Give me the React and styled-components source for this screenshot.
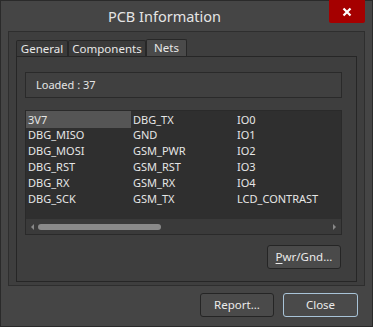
import React from 'react';
import styled, { createGlobalStyle } from 'styled-components';

const Global = createGlobalStyle`
  html, body { margin: 0; padding: 0; background: #454545; }
  body { font-family: 'Noto Sans', 'Open Sans', sans-serif; }
`;

const Window = styled.div`
  width: 373px;
  height: 327px;
  box-sizing: border-box;
  background: #454545;
  border: 1px solid #2a2a2a;
  display: flex;
  flex-direction: column;
  color: #e6e6e6;
`;

const TitleBar = styled.div`
  height: 30px;
  display: flex;
  align-items: flex-start;
  justify-content: center;
  position: relative;
`;

const Title = styled.div`
  font-size: 14.5px;
  margin-top: 5px;
  margin-right: 44px;
  color: #e4e4e4;
`;

const CloseX = styled.div`
  position: absolute;
  top: -1px;
  right: 7px;
  width: 36px;
  height: 23px;
  background: #a50000;
  display: flex;
  align-items: center;
  justify-content: center;
  border-radius: 0 0 2px 2px;
`;

const Panel = styled.div`
  margin: 0 7px;
  height: 255px;
  background: #3e3e3e;
  border: 1px solid #2e2e2e;
  padding: 7px 7px 6px 7px;
  box-sizing: border-box;
  display: flex;
  flex-direction: column;
`;

const Tabs = styled.div`
  display: flex;
  height: 17px;
  align-items: flex-end;
`;

const Tab = styled.div`
  width: ${p => p.$w}px;
  height: ${p => (p.$active ? 17 : 16)}px;
  box-sizing: border-box;
  text-align: center;
  font-size: 11.5px;
  line-height: ${p => (p.$active ? 16 : 15)}px;
  background: ${p => (p.$active ? '#4a4a4a' : '#3a3a3a')};
  border: 1px solid #272727;
  border-bottom: none;
  border-radius: 2px 2px 0 0;
  color: #e8e8e8;
  white-space: nowrap;
`;

const Page = styled.div`
  flex: 1;
  border: 1px solid #262626;
  background: #3e3e3e;
  padding: 15px 14px 12px 8px;
  display: flex;
  flex-direction: column;
`;

const LoadedBox = styled.div`
  height: 26px;
  box-sizing: border-box;
  border: 1px solid #2a2a2a;
  background: #404040;
  font-size: 11px;
  padding: 4px 0 0 10px;
  color: #e4e4e4;
`;

const List = styled.div`
  margin-top: 12px;
  height: 125px;
  box-sizing: border-box;
  border: 1px solid #2a2a2a;
  background: #2f2f2f;
  display: flex;
  flex-direction: column;
`;

const Grid = styled.div`
  flex: 1;
  display: grid;
  grid-template-columns: 105px 104px 1fr;
  grid-auto-rows: 16px;
  align-content: start;
`;

const Cell = styled.div`
  font-size: 11px;
  line-height: 16px;
  padding-left: 2px;
  background: ${p => (p.$sel ? '#555555' : 'transparent')};
  color: #e6e6e6;
  white-space: nowrap;
  ${p => p.$first && 'height: 17px; line-height: 17px;'}
`;

const ScrollBar = styled.div`
  height: 15px;
  background: #3a3a3a;
  display: flex;
  align-items: center;
  padding: 0 5px;
  gap: 4px;
`;

const Thumb = styled.div`
  width: 123px;
  height: 6px;
  border-radius: 3px;
  background: #8a8a8a;
`;

const Spacer = styled.div`
  flex: 1;
`;

const Arrow = styled.div`
  width: 0;
  height: 0;
  border-top: 3px solid transparent;
  border-bottom: 3px solid transparent;
  ${p => (p.$dir === 'left' ? 'border-right: 3px solid #888;' : 'border-left: 3px solid #888;')}
`;

const ButtonRow = styled.div`
  display: flex;
  justify-content: flex-end;
  margin-top: ${p => p.$mt}px;
  gap: 9px;
  padding-right: ${p => p.$pr || 0}px;
`;

const Button = styled.div`
  width: ${p => p.$w}px;
  height: 24px;
  box-sizing: border-box;
  border: 1px solid ${p => (p.$focus ? '#a9c4d8' : '#252525')};
  border-radius: 3px;
  background: #4a4a4a;
  font-size: 11.5px;
  display: flex;
  align-items: center;
  justify-content: center;
  color: #ebebeb;
  padding-bottom: 1px;
`;

const U = styled.span`
  text-decoration: underline;
  text-underline-offset: 2px;
`;

const rows = [
  ['3V7', 'DBG_TX', 'IO0'],
  ['DBG_MISO', 'GND', 'IO1'],
  ['DBG_MOSI', 'GSM_PWR', 'IO2'],
  ['DBG_RST', 'GSM_RST', 'IO3'],
  ['DBG_RX', 'GSM_RX', 'IO4'],
  ['DBG_SCK', 'GSM_TX', 'LCD_CONTRAST'],
];

export default function App() {
  return (
    <>
      <Global />
      <Window>
        <TitleBar>
          <Title>PCB Information</Title>
          <CloseX>
            <svg width="10" height="10" viewBox="0 0 10 10">
              <path d="M1.5 1.5 L8.5 8.5 M8.5 1.5 L1.5 8.5" stroke="#fff" strokeWidth="2.2" />
            </svg>
          </CloseX>
        </TitleBar>
        <Panel>
          <Tabs>
            <Tab $w={52}>General</Tab>
            <Tab $w={78}>Components</Tab>
            <Tab $w={41} $active>Nets</Tab>
          </Tabs>
          <Page>
            <LoadedBox>Loaded : 37</LoadedBox>
            <List>
              <Grid>
                {rows.map((r, i) =>
                  r.map((c, j) => (
                    <Cell key={i + '-' + j} $sel={i === 0 && j === 0} $first={i === 0}>
                      {c}
                    </Cell>
                  ))
                )}
              </Grid>
              <ScrollBar>
                <Arrow $dir="left" />
                <Thumb />
                <Spacer />
                <Arrow $dir="right" />
              </ScrollBar>
            </List>
            <ButtonRow $mt={10} $pr={1}>
              <Button $w={74}><span><U>P</U>wr/Gnd...</span></Button>
            </ButtonRow>
          </Page>
        </Panel>
        <ButtonRow $mt={7} $pr={14}>
          <Button $w={74}>Report...</Button>
          <Button $w={75} $focus>Close</Button>
        </ButtonRow>
      </Window>
    </>
  );
}
